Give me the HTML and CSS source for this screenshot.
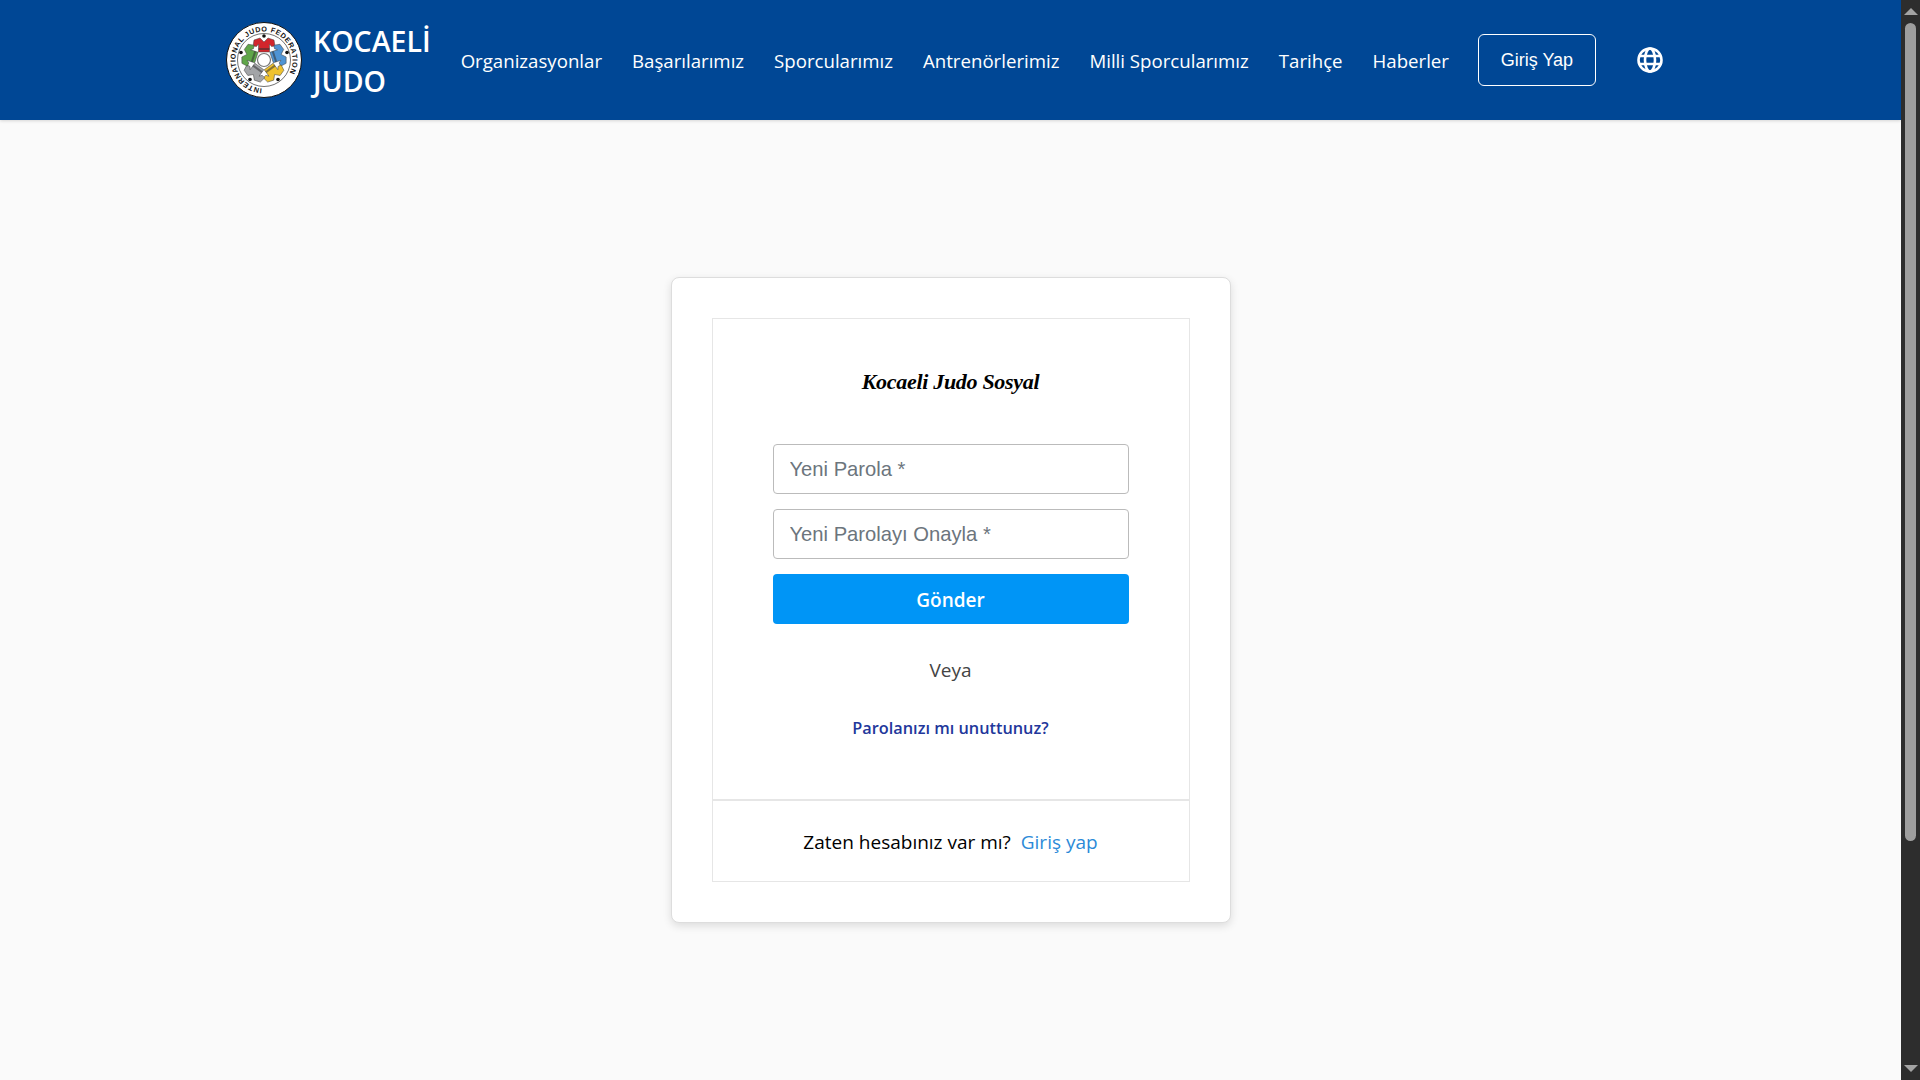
FILE: index.html
```html
<!DOCTYPE html>
<html lang="tr">
<head>
    <meta charset="UTF-8">
    <meta name="viewport" content="width=device-width, initial-scale=1.0">
    <title>Kocaeli Judo</title>
    <link rel="stylesheet" href="styles.css">
</head>
<body>
    <div class="page">
        <header class="navbar">
            <a class="brand" href="#">
                <svg class="brand-logo" viewBox="0 0 76 76" width="76" height="76">
                    <defs>
                        <path id="ringPath" d="M38 66.500A28.500 28.500 0 1 1 38 9.500A28.500 28.500 0 1 1 38 66.500"/>
                        <g id="jacket">
                            <path stroke="#444" stroke-width=".5" d="M-4-7-10-5-11 1-7.500 1.500-5.500-1-5.500 7 5.500 7 5.500-1 7.500 1.500 11 1 10-5 4-7 0-3Z"/>
                            <rect x="-5.500" y="3" width="11" height="2" fill="#333" opacity=".55"/>
                        </g>
                    </defs>
                    <circle cx="38" cy="38" r="37.500" fill="#fff" stroke="#111" stroke-width="1"/>
                    <text class="logo-text"><textPath href="#ringPath" startOffset="2">INTERNATIONAL JUDO FEDERATION</textPath></text>
                    <circle cx="38" cy="38" r="26.500" fill="#fff" stroke="#111" stroke-width=".6"/>
                    <use href="#jacket" fill="#d2262c" transform="translate(38 38) translate(0 -15)"/>
                    <use href="#jacket" fill="#4f94d4" transform="translate(38 38) rotate(72) translate(0 -15)"/>
                    <use href="#jacket" fill="#efc22e" transform="translate(38 38) rotate(144) translate(0 -15)"/>
                    <use href="#jacket" fill="#a3a5a8" transform="translate(38 38) rotate(216) translate(0 -15)"/>
                    <use href="#jacket" fill="#5fa649" transform="translate(38 38) rotate(288) translate(0 -15)"/>
                    <circle cx="38" cy="38" r="6.500" fill="#fff" stroke="#777" stroke-width="1.200"/>
                    <circle cx="38" cy="14" r="1.800" fill="#111"/>
                    <circle cx="61" cy="30.500" r="1.800" fill="#111"/>
                    <circle cx="52" cy="57.500" r="1.800" fill="#111"/>
                    <circle cx="24" cy="57.500" r="1.800" fill="#111"/>
                    <circle cx="15" cy="30.500" r="1.800" fill="#111"/>
                </svg>
                <span class="brand-name">KOCAELİ<br>JUDO</span>
            </a>
            <nav class="nav-links">
                <a href="#">Organizasyonlar</a>
                <a href="#">Başarılarımız</a>
                <a href="#">Sporcularımız</a>
                <a href="#">Antrenörlerimiz</a>
                <a href="#">Milli Sporcularımız</a>
                <a href="#">Tarihçe</a>
                <a href="#">Haberler</a>
            </nav>
            <button class="login-btn">Giriş Yap</button>
            <svg class="globe" viewBox="0 0 26 26" width="26" height="26" fill="none" stroke="#fff" stroke-width="2.600">
                <circle cx="13" cy="13" r="11.500"/>
                <ellipse cx="13" cy="13" rx="5" ry="11.500"/>
                <path d="M2.500 9H23.500M2.500 17H23.500"/>
            </svg>
        </header>

        <main class="content">
            <div class="card">
                <div class="box">
                    <div class="box-body">
                        <h1 class="title">Kocaeli Judo Sosyal</h1>
                        <form class="reset-form">
                            <input type="password" placeholder="Yeni Parola *">
                            <input type="password" placeholder="Yeni Parolayı Onayla *">
                            <button type="button" class="submit-btn">Gönder</button>
                        </form>
                        <p class="or-text">Veya</p>
                        <a class="forgot-link" href="#">Parolanızı mı unuttunuz?</a>
                    </div>
                    <div class="box-footer">
                        Zaten hesabınız var mı? <a href="#">Giriş yap</a>
                    </div>
                </div>
            </div>
        </main>
    </div>

    <div class="scrollbar">
        <span class="arrow-up"></span>
        <div class="track"><div class="thumb"></div></div>
        <span class="arrow-down"></span>
    </div>
</body>
</html>
```

FILE: styles.css
```css
*{
    box-sizing: border-box;
}
html,body{
    height: 100%;
    margin: 0;
    overflow: hidden;
}
body{
    display: flex;
    background-color: #fafafa;
    font-family: "Open Sans", "Noto Sans", sans-serif;
}
.page{
    flex: 1;
    min-width: 0;
}

/* header */
.navbar{
    display: flex;
    align-items: center;
    height: 120px;
    padding-left: 226px;
    background-color: #004795;
    box-shadow: 0 1px 3px rgba(0,0,0,.15);
}
.brand{
    display: flex;
    align-items: center;
    gap: 11px;
    color: white;
    text-decoration: none;
}
.brand-logo{
    flex: none;
}
.logo-text{
    font-family: "Liberation Sans", sans-serif;
    font-size: 7.200px;
    font-weight: bold;
    letter-spacing: .6px;
    fill: #111;
}
.brand-name{
    padding-top: 2px;
    font-size: 28.500px;
    font-weight: 600;
    line-height: 40px;
}
.nav-links{
    display: flex;
    gap: 30px;
    margin-left: 30px;
    padding-top: 1px;
}
.nav-links a{
    color: white;
    font-size: 18.650px;
    text-decoration: none;
}
.login-btn{
    width: 118px;
    height: 52px;
    margin-left: 29px;
    background: none;
    border: 1px solid white;
    border-radius: 6px;
    color: white;
    font-family: "Liberation Sans", sans-serif;
    font-size: 18px;
}
.globe{
    margin-left: 41px;
}

/* card */
.content{
    padding-top: 157px;
}
.card{
    width: 560px;
    margin: 0 auto;
    padding: 40px;
    background-color: white;
    border: 1px solid #ddd;
    border-radius: 8px;
    box-shadow: 0 3px 8px rgba(0,0,0,.12);
}
.box{
    border: 1px solid #e6e6e6;
}
.box-body{
    height: 482px;
    padding: 50px 60px 0;
    text-align: center;
    border-bottom: 2px solid #e6e6e6;
}
.title{
    height: 26px;
    margin: 0 0 49px;
    color: black;
    font-family: "Liberation Serif", serif;
    font-size: 22px;
    font-style: italic;
    font-weight: bold;
    letter-spacing: -.3px;
    line-height: 26px;
}
.reset-form{
    display: flex;
    flex-direction: column;
    gap: 15px;
}
.reset-form input{
    height: 50px;
    padding: 0 16px;
    background-color: white;
    border: 1px solid #bbb;
    border-radius: 4px;
    font-family: "Liberation Sans", sans-serif;
    font-size: 20.200px;
}
.reset-form input::placeholder{
    color: #6c757d;
}
.submit-btn{
    height: 50px;
    padding-top: 2px;
    background-color: #0095f6;
    border: none;
    border-radius: 4px;
    color: white;
    font-family: "Open Sans", sans-serif;
    font-size: 19px;
    font-weight: 600;
}
.or-text{
    margin: 32px 0 0;
    color: #444;
    font-size: 19px;
    line-height: 28px;
}
.forgot-link{
    display: block;
    margin-top: 30px;
    color: #22379b;
    font-size: 16.300px;
    font-weight: 600;
    text-decoration: none;
    line-height: 28px;
}
.box-footer{
    height: 80px;
    padding-top: 1px;
    color: black;
    font-size: 19px;
    line-height: 80px;
    text-align: center;
}
.box-footer a{
    margin-left: 5px;
    color: #2b8ad8;
    text-decoration: none;
}

/* scrollbar drawn by hand, headless browser hides the real one */
.scrollbar{
    display: flex;
    flex-direction: column;
    align-items: center;
    flex: none;
    width: 19px;
    height: 100%;
    background-color: #2d2d2d;
}
.arrow-up,.arrow-down{
    flex: none;
    width: 0;
    height: 0;
    border-left: 7px solid transparent;
    border-right: 7px solid transparent;
}
.arrow-up{
    margin-top: 8px;
    border-bottom: 7px solid #a3a3a3;
}
.arrow-down{
    margin-bottom: 8px;
    border-top: 7px solid #a3a3a3;
}
.track{
    flex: 1;
    width: 11px;
}
.thumb{
    height: 818px;
    margin-top: 8px;
    background-color: #9e9e9e;
    border-radius: 6px;
}
```
